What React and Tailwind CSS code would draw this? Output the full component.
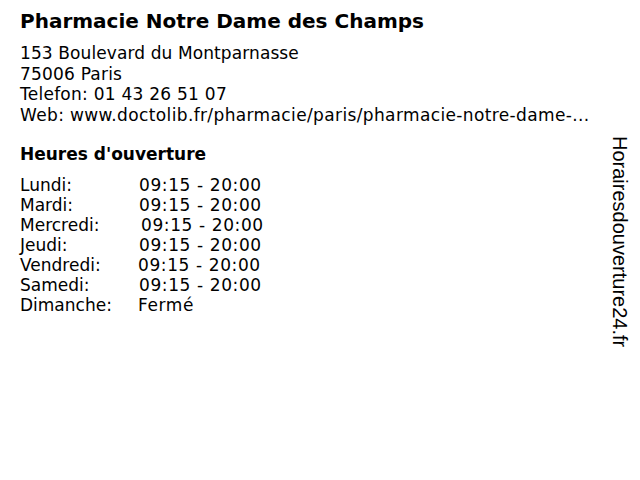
import React from "react";

const hours = [
  { day: "Lundi:", time: "09:15 - 20:00", shift: "" },
  { day: "Mardi:", time: "09:15 - 20:00", shift: "" },
  { day: "Mercredi:", time: "09:15 - 20:00", shift: "pl-[2px]" },
  { day: "Jeudi:", time: "09:15 - 20:00", shift: "" },
  { day: "Vendredi:", time: "09:15 - 20:00", shift: "-ml-px" },
  { day: "Samedi:", time: "09:15 - 20:00", shift: "" },
  { day: "Dimanche:", time: "Fermé", shift: "-ml-px" },
];

const App = () => {
  return (
    <div className="w-[640px] h-[480px] bg-white flex text-black font-['DejaVu_Sans',sans-serif]">
      <div className="flex-1 pl-5 pt-[8px]">
        <h1 className="text-[20px] font-bold leading-[26px]">
          Pharmacie Notre Dame des Champs
        </h1>
        <div className="mt-[9px] text-[17px] leading-[20.5px]">
          <p className="tracking-[0.1px]">153 Boulevard du Montparnasse</p>
          <p className="tracking-[0.2px]">75006 Paris</p>
          <p className="tracking-[0.25px]">Telefon: 01 43 26 51 07</p>
          <p className="tracking-[0.37px]">
            Web: www.doctolib.fr/pharmacie/paris/pharmacie-notre-dame-...
          </p>
        </div>
        <h2 className="mt-[18px] text-[17px] font-bold leading-[22px]">
          Heures d'ouverture
        </h2>
        <div className="mt-[10px] text-[17px] leading-[20px]">
          {hours.map((h) => (
            <div key={h.day} className="flex">
              <span className="w-[119px]">{h.day}</span>
              <span className={`tracking-[0.6px] ${h.shift}`}>{h.time}</span>
            </div>
          ))}
        </div>
      </div>
      <div className="w-[40px] pt-[136px] flex justify-center">
        <span className="[writing-mode:vertical-rl] text-[20px] leading-[22px] font-['Liberation_Sans',sans-serif]">
          Horairesdouverture24.fr
        </span>
      </div>
    </div>
  );
};

export default App;
